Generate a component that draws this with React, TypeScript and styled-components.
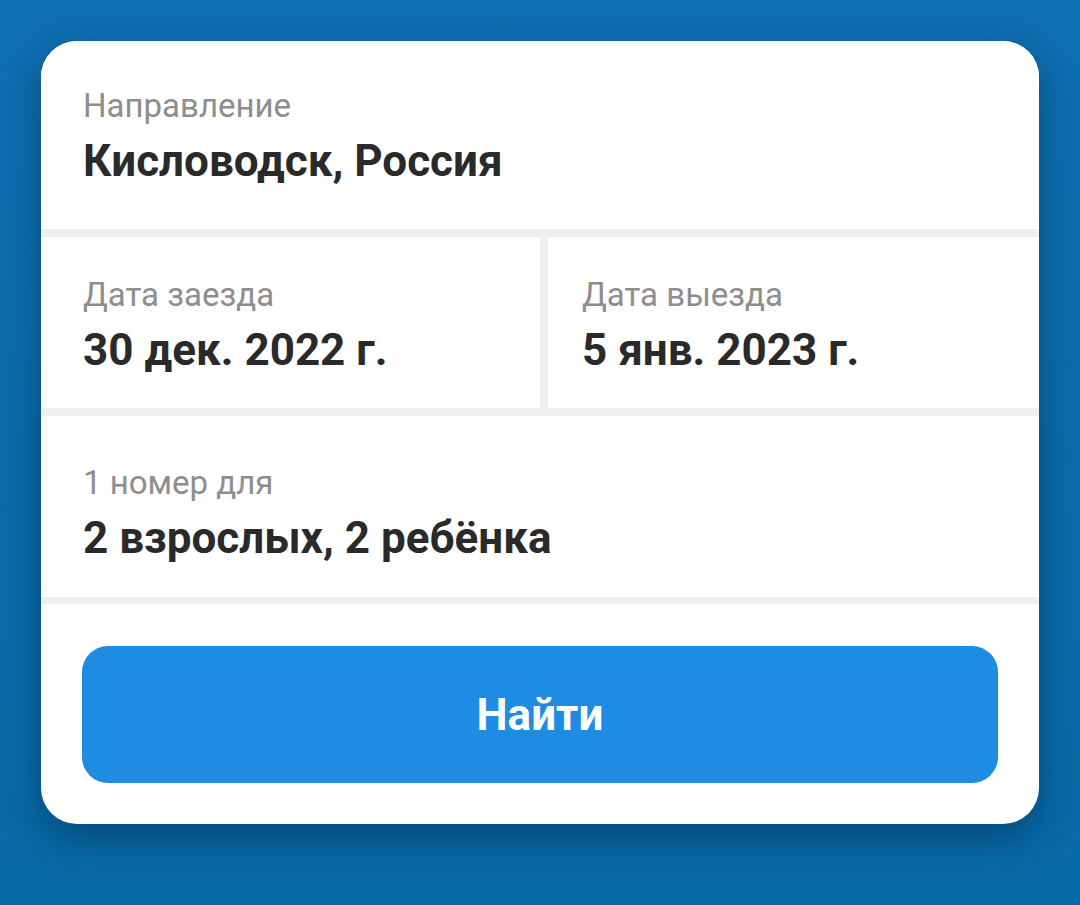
import React from "react";
import styled, { createGlobalStyle } from "styled-components";

const GlobalStyle = createGlobalStyle`
  html, body {
    margin: 0;
    padding: 0;
  }
  body {
    font-family: Roboto, "Noto Sans", "Liberation Sans", sans-serif;
    -webkit-font-smoothing: antialiased;
  }
`;

const Page = styled.div`
  box-sizing: border-box;
  width: 1080px;
  height: 905px;
  padding: 41px 41px 0 41px;
  background: linear-gradient(180deg, #0e6fb2 0%, #0b6cab 60%, #086aa6 100%);
  overflow: hidden;
`;

const Card = styled.div`
  width: 998px;
  background: #ffffff;
  border-radius: 36px;
  overflow: hidden;
  box-shadow: 0 14px 40px rgba(0, 30, 60, 0.45);
  display: flex;
  flex-direction: column;
`;

const Field = styled.div<{ $top: number; $bottom: number; $left?: number }>`
  display: flex;
  flex-direction: column;
  gap: 10px;
  padding: ${(p) => p.$top}px 24px ${(p) => p.$bottom}px ${(p) => p.$left ?? 42}px;
  background: #ffffff;
`;

const Label = styled.div`
  font-size: 33px;
  line-height: 38px;
  color: #8e8e8e;
  font-weight: 400;
`;

const Value = styled.div`
  font-size: 44px;
  line-height: 52px;
  color: #2a2a2a;
  font-weight: 700;
`;

const Divider = styled.div<{ $h?: number }>`
  height: ${(p) => p.$h ?? 8}px;
  background: #efefef;
`;

const DatesRow = styled.div`
  display: grid;
  grid-template-columns: 499px 1fr;
  column-gap: 8px;
  background: #efefef;
`;

const ButtonArea = styled.div`
  padding: 42px 41px 41px 41px;
`;

const SearchButton = styled.button`
  width: 100%;
  height: 137px;
  border: none;
  border-radius: 26px;
  background: #1e8ce3;
  color: #ffffff;
  font-family: Roboto, "Noto Sans", "Liberation Sans", sans-serif;
  font-size: 44px;
  font-weight: 700;
  cursor: pointer;
`;

export default function App() {
  return (
    <>
      <GlobalStyle />
      <Page>
        <Card>
          <Field $top={46} $bottom={42}>
            <Label>Направление</Label>
            <Value>Кисловодск, Россия</Value>
          </Field>
          <Divider />
          <DatesRow>
            <Field $top={39} $bottom={32}>
              <Label>Дата заезда</Label>
              <Value>30 дек. 2022 г.</Value>
            </Field>
            <Field $top={39} $bottom={32} $left={34}>
              <Label>Дата выезда</Label>
              <Value>5 янв. 2023 г.</Value>
            </Field>
          </DatesRow>
          <Divider />
          <Field $top={48} $bottom={33}>
            <Label>1 номер для</Label>
            <Value>2 взрослых, 2 ребёнка</Value>
          </Field>
          <Divider $h={7} />
          <ButtonArea>
            <SearchButton>Найти</SearchButton>
          </ButtonArea>
        </Card>
      </Page>
    </>
  );
}
